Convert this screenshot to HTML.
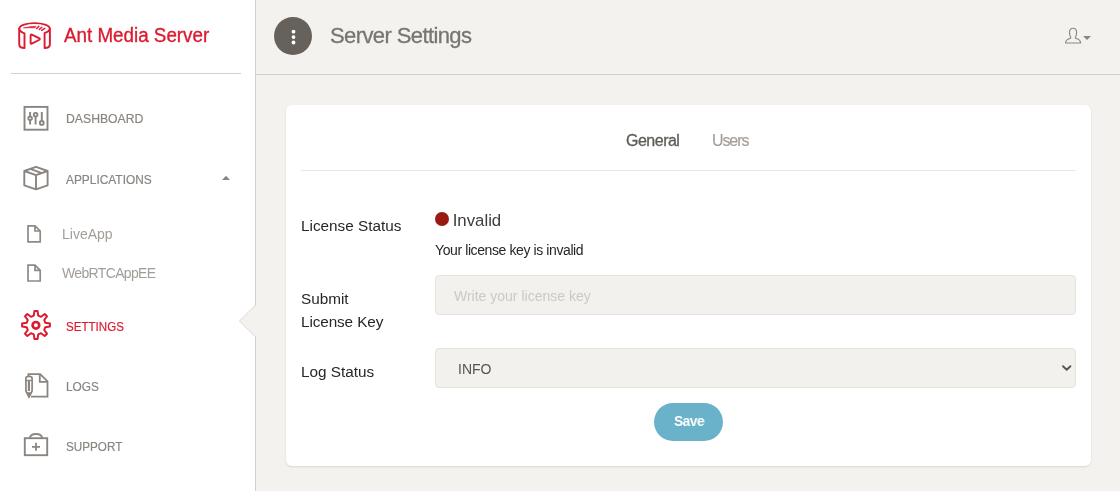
<!DOCTYPE html>
<html><head><meta charset="utf-8">
<style>
*{box-sizing:border-box;margin:0;padding:0}
html,body{width:1120px;height:491px;overflow:hidden;background:#f3f2ef;font-family:"Liberation Sans",sans-serif}
#root{position:absolute;left:0;top:0;width:1120px;height:491px;will-change:transform}
.abs{position:absolute}
svg{position:absolute;overflow:visible}
#side{position:absolute;left:0;top:0;width:255px;height:491px;background:#fff}
#sideborder{position:absolute;left:255px;top:0;width:1px;height:491px;background:#d2d0cb}
.sep{position:absolute;left:11px;top:73px;width:230px;height:1px;background:#d3d1cd}
.brand{position:absolute;left:64px;top:24px;font-size:20px;color:#dc1a30;white-space:nowrap;transform:scaleX(0.94);transform-origin:0 0;-webkit-text-stroke:0.35px #dc1a30}
.nav{position:absolute;left:66px;font-size:13px;color:#8a8580;white-space:nowrap;transform-origin:0 0;-webkit-text-stroke:0.2px #8a8580}
.sub{position:absolute;left:62px;font-size:14px;color:#a29d98;white-space:nowrap}
.hdrline{position:absolute;left:256px;top:74px;width:864px;height:1px;background:#d2d0cb}
.dotbtn{position:absolute;left:274px;top:17px;width:38px;height:38px;border-radius:50%;background:#66615b}
.dot{position:absolute;left:291.7px;width:3.6px;height:3.6px;border-radius:50%;background:#fff}
.title{position:absolute;left:330px;top:23px;font-size:22px;color:#777573;white-space:nowrap;letter-spacing:-0.6px;-webkit-text-stroke:0.3px #777573}
.card{position:absolute;left:286px;top:105px;width:805px;height:361px;background:#fff;border-radius:6px;box-shadow:0 1px 2px rgba(60,50,40,0.14)}
.tab{position:absolute;font-size:16px;white-space:nowrap}
.tabline{position:absolute;left:301px;top:170px;width:775px;height:1px;background:#ece6dc}
.lbl{position:absolute;left:301px;font-size:15.3px;color:#272727;white-space:nowrap}
.inp{position:absolute;left:435px;width:641px;height:40px;background:#f2f1ed;border:1px solid #e6e3dd;border-radius:4px}
.save{position:absolute;left:654px;top:403px;width:69px;height:38px;border-radius:19px;background:#69b2c9}
</style></head><body><div id="root">
<div id="side"></div>
<div id="sideborder"></div>
<!-- notch -->
<svg style="left:0;top:0" width="260" height="345">
  <path d="M256.5,304.5 L239.5,321 L256.5,337.5 Z" fill="#f3f2ef"/>
  <path d="M256,304.5 L239.5,321 L256,337.5" fill="none" stroke="#d9d7d2" stroke-width="1"/>
</svg>
<!-- logo -->
<svg style="left:18px;top:22px" width="34" height="28" viewBox="0 0 34 28" fill="none" stroke="#dc1a30" stroke-width="1.9" stroke-linejoin="round" stroke-linecap="round">
  <path d="M1.2,7 C1.2,-0.8 31.9,-0.8 31.9,7"/>
  <path d="M1.2,7 V22 Q1.2,25.5 4.2,25.8 L6.5,26 V11.4 Q2,9.8 1.2,7 Z"/>
  <path d="M31.9,7 V22 Q31.9,25.5 28.9,25.8 L26.6,26 V11.2 Q31.1,9.6 31.9,7 Z"/>
  <path d="M5.8,5.9 Q12,4.3 17.8,4.2 L17.1,5.8 Q11,5.5 5.8,5.9 Z" stroke-width="0.6" fill="#dc1a30"/>
  <path d="M18.6,6.5 L20.8,4.4 M21.4,7.4 L23.8,5.3 M23.6,8.3 L26.8,6.3" stroke-width="1.5"/>
  <path d="M12.6,13.8 Q12.6,11.9 14.3,12.8 L21,16.2 Q22.6,17.1 21,18 L14.3,21.4 Q12.6,22.3 12.6,20.4 Z" stroke-width="1.9"/>
</svg>
<div class="brand">Ant Media Server</div>
<div class="sep"></div>

<!-- dashboard icon -->
<svg style="left:0;top:0" width="60" height="140" fill="none" stroke="#8a8580" stroke-width="1.9">
  <rect x="24.5" y="106.9" width="23" height="22.8"/>
  <path d="M30.1,112 V124.6 M35.6,112 V124.6 M41.8,112 V121"/>
  <circle cx="30.1" cy="118.3" r="1.8" fill="#fff"/>
  <circle cx="35.6" cy="114.7" r="1.8" fill="#fff"/>
  <circle cx="41.8" cy="122.9" r="1.9" fill="#fff"/>
</svg>
<div class="nav" style="top:111px;transform:scaleX(0.94)">DASHBOARD</div>

<!-- applications icon -->
<svg style="left:0;top:0" width="60" height="200" fill="none" stroke="#8a8580" stroke-width="1.9" stroke-linejoin="round">
  <path d="M36,166.8 L47.6,171 L47.6,185.4 L36,189.4 L24.3,185.4 L24.3,171 Z"/>
  <path d="M24.3,171 L36,175.2 L47.6,171 M36,175.2 V189.4"/>
  <path d="M30.2,168.9 L41.9,173.1" stroke-width="1.8"/>
</svg>
<div class="nav" style="top:172px;transform:scaleX(0.915)">APPLICATIONS</div>
<svg style="left:0;top:0" width="240" height="190"><path d="M222,180 L226,175.8 L230,180 Z" fill="#8a8580"/></svg>

<!-- doc icons -->
<svg style="left:0;top:0" width="60" height="290" fill="none" stroke="#8e8a85" stroke-width="1.7" stroke-linejoin="miter">
  <path d="M28,225.9 H35 L40.2,231 V241.8 H28 Z M35,225.9 V231 H40.2"/>
  <path d="M28,265.2 H35 L40.2,270.3 V281 H28 Z M35,265.2 V270.3 H40.2"/>
</svg>
<div class="sub" style="top:226px">LiveApp</div>
<div class="sub" style="top:265px;letter-spacing:-0.65px">WebRTCAppEE</div>

<!-- settings gear -->
<svg style="left:20px;top:309px" width="32" height="32" viewBox="0 0 32 32" fill="none" stroke="#dc1a30" stroke-width="2" stroke-linejoin="round">
  <path d="M13.76,6.67 L14.42,2.09 L17.58,2.09 L18.24,6.67 L21.02,7.81 L24.72,5.04 L26.96,7.28 L24.19,10.98 L25.33,13.76 L29.91,14.42 L29.91,17.58 L25.33,18.24 L24.19,21.02 L26.96,24.72 L24.72,26.96 L21.02,24.19 L18.24,25.33 L17.58,29.91 L14.42,29.91 L13.76,25.33 L10.98,24.19 L7.28,26.96 L5.04,24.72 L7.81,21.02 L6.67,18.24 L2.09,17.58 L2.09,14.42 L6.67,13.76 L7.81,10.98 L5.04,7.28 L7.28,5.04 L10.98,7.81 Z"/>
  <circle cx="15.9" cy="16.3" r="3.3" stroke-width="2.7"/>
</svg>
<div class="nav" style="top:319px;color:#dc1a30;-webkit-text-stroke-color:#dc1a30;transform:scaleX(0.89)">SETTINGS</div>

<!-- logs icon -->
<svg style="left:0;top:0" width="60" height="410" fill="none" stroke="#8a8580" stroke-width="1.8" stroke-linejoin="miter">
  <path d="M28.4,376.5 V374.2 H40.2 L47.5,381.3 V396.6 H31"/>
  <path d="M39.8,374.2 V381.8 H47.5"/>
  <path d="M25.9,378.2 Q25.9,376.4 29,376.4 Q32.1,376.4 32.1,378.2 V391 L29,397.2 L25.9,391 Z" stroke-width="1.7"/>
  <path d="M26,380.4 H32" stroke-width="1.3"/>
  <path d="M28.9,381 V391" stroke-width="2.2"/>
  <path d="M26.8,392.6 H31.2 L29,396.5 Z" fill="#8a8580" stroke-width="0.6"/>
</svg>
<div class="nav" style="top:379px;transform:scaleX(0.91)">LOGS</div>

<!-- support icon -->
<svg style="left:0;top:0" width="60" height="470" fill="none" stroke="#8a8580" stroke-width="1.9">
  <rect x="24.8" y="438.2" width="22.4" height="17"/>
  <path d="M29.8,438 Q30.5,434 36,434 Q41.5,434 42.2,438"/>
  <path d="M32,446.8 H40 M36,442.8 V450.8" stroke-width="1.8"/>
</svg>
<div class="nav" style="top:439px;transform:scaleX(0.90)">SUPPORT</div>

<div class="hdrline"></div>
<div class="dotbtn"></div>
<svg style="left:0;top:0" width="320" height="60" fill="#fff"><circle cx="293.5" cy="31.7" r="1.9"/><circle cx="293.5" cy="37.1" r="1.9"/><circle cx="293.5" cy="42.5" r="1.9"/></svg>
<div class="title">Server Settings</div>

<!-- user icon -->
<svg style="left:0;top:0" width="1100" height="60" fill="none" stroke="#8c8883" stroke-width="1.15">
  <path d="M1070.6,37 Q1069.5,35 1069.5,32.5 Q1069.5,28.2 1073.1,28.2 Q1076.6,28.2 1076.6,32.5 Q1076.6,35 1075.5,37 V38.2 Q1080.6,39.3 1080.6,43 H1065.6 Q1065.6,39.3 1070.6,38.2 Z"/>
  <path d="M1083,36 H1091 L1087,40 Z" fill="#8a8580" stroke="none"/>
</svg>

<div class="card"></div>
<div class="tab" style="left:626px;top:132px;color:#5f5b56;letter-spacing:-0.5px;-webkit-text-stroke:0.3px #5f5b56">General</div>
<div class="tab" style="left:712px;top:132px;color:#a39d95;letter-spacing:-1.1px;-webkit-text-stroke:0.15px #a39d95">Users</div>
<div class="tabline"></div>

<div class="lbl" style="top:216.5px">License Status</div>
<div class="lbl" style="top:290px">Submit</div>
<div class="lbl" style="top:313.2px;letter-spacing:-0.1px">License Key</div>
<div class="lbl" style="top:363px">Log Status</div>

<div class="abs" style="left:435px;top:212px;width:14px;height:14px;border-radius:50%;background:#991a10"></div>
<div class="abs" style="left:452.7px;top:211px;font-size:16.8px;color:#3f3c39">Invalid</div>
<div class="abs" style="left:435px;top:242px;font-size:14px;color:#262626;letter-spacing:-0.4px">Your license key is invalid</div>

<div class="inp" style="top:275px"></div>
<div class="abs" style="left:454px;top:287.7px;font-size:14px;color:#cbc9c3">Write your license key</div>
<div class="inp" style="top:348px"></div>
<div class="abs" style="left:458px;top:361px;font-size:14px;color:#57534e">INFO</div>
<svg style="left:0;top:0" width="1100" height="400" fill="none" stroke="#5a5550" stroke-width="1.9" stroke-linecap="round" stroke-linejoin="round">
  <path d="M1063,366.2 L1066.7,369.8 L1070.4,366.2"/>
</svg>

<div class="save"></div>
<div class="abs" style="left:673.5px;top:412.3px;font-size:15.3px;font-weight:bold;color:#fff;letter-spacing:-0.6px;transform:scaleX(0.9);transform-origin:0 0">Save</div>
</div></body></html>
